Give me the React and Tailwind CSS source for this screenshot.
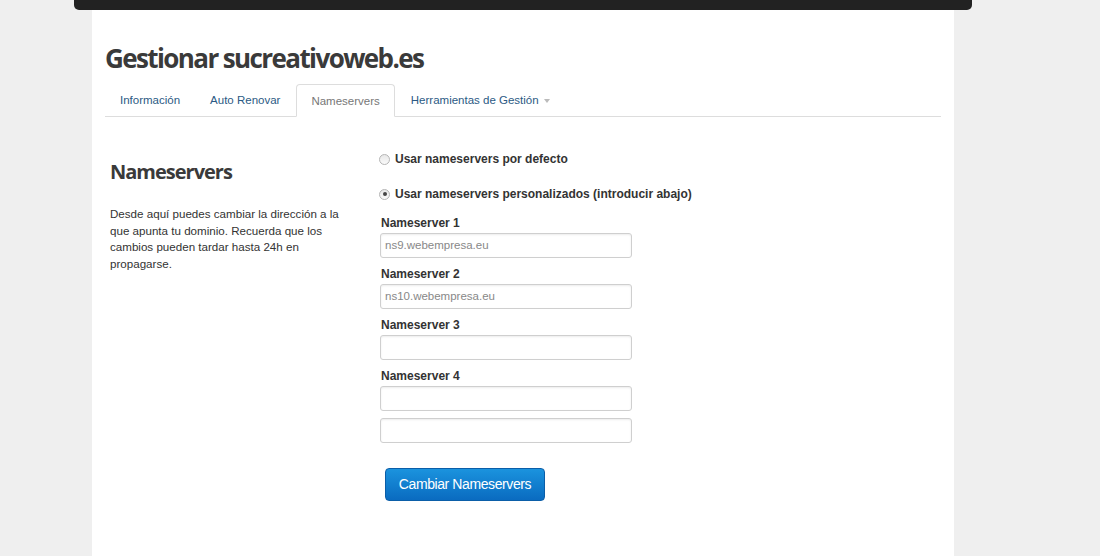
import React from "react";

function Radio({ checked }) {
  return (
    <span className="inline-block w-[11px] h-[11px] rounded-full border border-[#b5b5b5] bg-gradient-to-b from-[#e8e8e8] to-[#fafafa] relative shrink-0">
      {checked && (
        <span className="absolute left-[2.5px] top-[2.5px] w-[4px] h-[4px] rounded-full bg-[#444]" />
      )}
    </span>
  );
}

function Field({ label, value }) {
  return (
    <div className="flex flex-col">
      {label && (
        <div className="text-[12px] font-bold text-[#333] tracking-[0px] leading-[14px] mb-[3px] ml-[1px]">{label}</div>
      )}
      <div className="w-[252px] h-[25px] border border-[#cfcfcf] rounded-[3px] bg-white shadow-[inset_0_1px_2px_rgba(0,0,0,0.08)] flex items-center px-[4px] text-[11.5px] text-[#888]">
        {value}
      </div>
    </div>
  );
}

export default function App() {
  return (
    <div className="w-[1100px] h-[556px] bg-[#efefef] overflow-hidden relative" style={{ fontFamily: '"Liberation Sans", Arial, sans-serif' }}>
      <div className="absolute left-[74px] top-0 w-[898px] h-[10px] bg-[#222] rounded-b-[5px]" />
      <div className="ml-[92px] mt-[9px] w-[862px] h-[547px] bg-white px-[13px] pt-[31px]">
        <h1 className="text-[26px] font-bold text-[#3a3a3a] tracking-[-1.6px] leading-[36px] m-0" style={{ fontFamily: '"Open Sans", sans-serif' }}>
          Gestionar sucreativoweb.es
        </h1>
        <div className="mt-[8px] flex border-b border-[#dddddd] h-[33px] pl-[1px] gap-[2px]">
          <div className="px-[14px] pt-[2px] h-[32px] flex items-center text-[11.5px] text-[#2b5a84]">Información</div>
          <div className="px-[14px] pt-[2px] h-[32px] flex items-center text-[11.5px] text-[#2b5a84]">Auto Renovar</div>
          <div className="px-[14px] pt-[2px] h-[33px] flex items-center text-[11.5px] text-[#777] border border-[#dddddd] border-b-white rounded-t-[4px] bg-white">Nameservers</div>
          <div className="px-[14px] pt-[2px] h-[32px] flex items-center text-[11.5px] text-[#2b5a84]">
            Herramientas de Gestión
            <span className="ml-[5px] w-0 h-0 border-l-[3px] border-r-[3px] border-t-[4px] border-l-transparent border-r-transparent border-t-[#bbb]" />
          </div>
        </div>
        <div className="flex mt-[35px]">
          <div className="w-[273px] pl-[5px] pt-[5px]">
            <h2 className="text-[20px] font-bold text-[#3a3a3a] tracking-[-1px] leading-[30px] m-0" style={{ fontFamily: '"Open Sans", sans-serif' }}>
              Nameservers
            </h2>
            <p className="mt-[19px] text-[11.6px] leading-[16.5px] text-[#333] w-[238px]">
              Desde aquí puedes cambiar la dirección a la que apunta tu dominio. Recuerda que los cambios pueden tardar hasta 24h en propagarse.
            </p>
          </div>
          <div className="flex flex-col">
            <label className="flex items-center gap-[5px] text-[12px] font-bold text-[#333] tracking-[0px] ml-[1px] h-[14px]">
              <Radio /> Usar nameservers por defecto
            </label>
            <label className="flex items-center gap-[5px] text-[12px] font-bold text-[#333] tracking-[0px] ml-[1px] h-[14px] mt-[21px]">
              <Radio checked /> Usar nameservers personalizados (introducir abajo)
            </label>
            <div className="flex flex-col gap-[9px] mt-[15px] ml-[2px]">
              <Field label="Nameserver 1" value="ns9.webempresa.eu" />
              <Field label="Nameserver 2" value="ns10.webempresa.eu" />
              <Field label="Nameserver 3" value="" />
              <Field label="Nameserver 4" value="" />
              <div className="mt-[-2px]"><Field value="" /></div>
            </div>
            <button className="mt-[25px] ml-[7px] w-[160px] h-[33px] rounded-[4px] bg-gradient-to-b from-[#1b93de] to-[#0a6bc0] border border-[#0b5ea8] text-white text-[14px] tracking-[-0.4px]">
              Cambiar Nameservers
            </button>
          </div>
        </div>
      </div>
    </div>
  );
}
